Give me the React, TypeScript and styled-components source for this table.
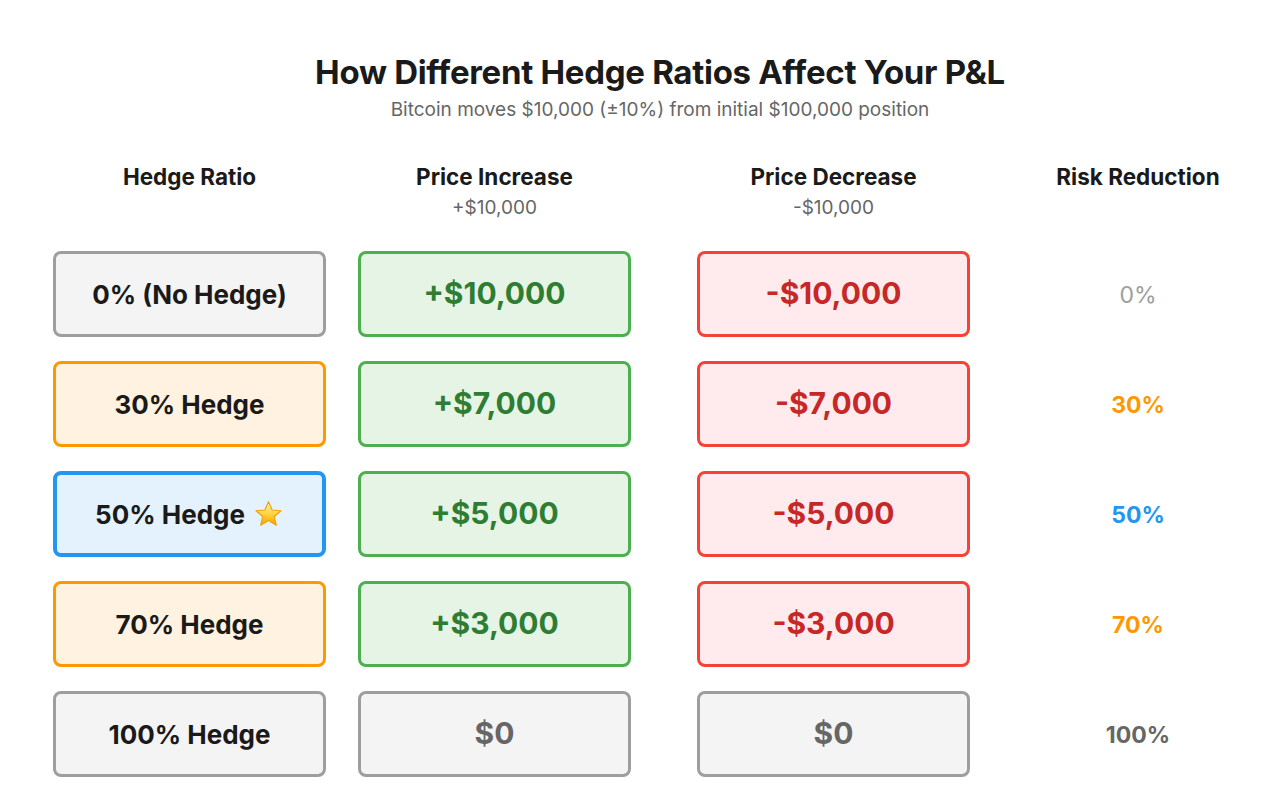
import styled, { createGlobalStyle } from "styled-components";

const GlobalStyle = createGlobalStyle`
  html, body {
    margin: 0;
    padding: 0;
    background: #ffffff;
    font-family: Inter, "Noto Sans", sans-serif;
    color: #1a1a1a;
  }
`;

type Tone = "gray" | "orange" | "blue" | "green" | "red" | "zero";

const tones: Record<Tone, { bg: string; border: string; text: string; width: number }> = {
  gray: { bg: "#f4f4f4", border: "#9e9e9e", text: "#1a1a1a", width: 3 },
  orange: { bg: "#fff2e0", border: "#ff9800", text: "#1a1a1a", width: 3 },
  blue: { bg: "#e3f2fd", border: "#2196f3", text: "#1a1a1a", width: 4 },
  green: { bg: "#e6f4e6", border: "#4caf50", text: "#2e7d32", width: 3 },
  red: { bg: "#ffebee", border: "#f44336", text: "#c62828", width: 3 },
  zero: { bg: "#f4f4f4", border: "#9e9e9e", text: "#666666", width: 3 },
};

const Page = styled.div`
  padding: 52px 5px 0 37px;
`;

const Header = styled.header`
  display: flex;
  flex-direction: column;
  align-items: center;
  padding-left: 27px;
  margin-bottom: 41px;
`;

const Title = styled.h1`
  margin: 0;
  font-size: 33px;
  font-weight: 700;
  line-height: 40px;
  letter-spacing: -0.3px;
  color: #1a1a1a;
`;

const Subtitle = styled.p`
  margin: 6px 0 0;
  font-size: 19px;
  line-height: 24px;
  color: #666666;
`;

const Grid = styled.div`
  display: grid;
  grid-template-columns: 305px 305px 373px 236px;
  row-gap: 24px;
  justify-items: center;
  align-items: center;
`;

const ColHead = styled.div`
  display: flex;
  flex-direction: column;
  align-items: center;
  align-self: start;
  height: 64px;
`;

const ColTitle = styled.div`
  font-size: 22.5px;
  font-weight: 700;
  line-height: 28px;
  color: #1a1a1a;
`;

const ColSub = styled.div`
  margin-top: 6px;
  font-size: 19px;
  line-height: 22px;
  color: #666666;
`;

const Cell = styled.div<{ $tone: Tone }>`
  box-sizing: border-box;
  width: 273px;
  height: 86px;
  display: flex;
  align-items: center;
  justify-content: center;
  gap: 8px;
  border-radius: 8px;
  background: ${(p) => tones[p.$tone].bg};
  border: ${(p) => tones[p.$tone].width}px solid ${(p) => tones[p.$tone].border};
  color: ${(p) => tones[p.$tone].text};
`;

const RatioText = styled.span`
  font-size: 26px;
  font-weight: 700;
`;

const Amount = styled.span`
  font-size: 30px;
  font-weight: 700;
  margin-top: -2px;
`;

const Risk = styled.div<{ $color: string; $bold: boolean }>`
  font-size: 23px;
  font-weight: ${(p) => (p.$bold ? 700 : 400)};
  color: ${(p) => p.$color};
  margin-top: 2px;
`;

const Star = () => (
  <svg width="31" height="31" viewBox="0 0 28 28" aria-hidden="true">
    <defs>
      <linearGradient id="starFill" x1="0" y1="0" x2="0" y2="1">
        <stop offset="0" stopColor="#fff3b0" />
        <stop offset="0.55" stopColor="#ffd23a" />
        <stop offset="1" stopColor="#f5a100" />
      </linearGradient>
    </defs>
    <path
      d="M14 2.5 L17.3 10 L25.3 10.6 L19.2 15.8 L21.1 23.7 L14 19.5 L6.9 23.7 L8.8 15.8 L2.7 10.6 L10.7 10 Z"
      fill="url(#starFill)"
      stroke="#f0a200"
      strokeWidth="1"
      strokeLinejoin="round"
    />
  </svg>
);

interface Row {
  label: string;
  tone: Tone;
  star?: boolean;
  up: string;
  down: string;
  risk: string;
  riskColor: string;
  riskBold: boolean;
}

const rows: Row[] = [
  { label: "0% (No Hedge)", tone: "gray", up: "+$10,000", down: "-$10,000", risk: "0%", riskColor: "#9e9e9e", riskBold: false },
  { label: "30% Hedge", tone: "orange", up: "+$7,000", down: "-$7,000", risk: "30%", riskColor: "#ff9800", riskBold: true },
  { label: "50% Hedge", tone: "blue", star: true, up: "+$5,000", down: "-$5,000", risk: "50%", riskColor: "#2196f3", riskBold: true },
  { label: "70% Hedge", tone: "orange", up: "+$3,000", down: "-$3,000", risk: "70%", riskColor: "#ff9800", riskBold: true },
  { label: "100% Hedge", tone: "gray", up: "$0", down: "$0", risk: "100%", riskColor: "#666666", riskBold: true },
];

export default function App() {
  return (
    <>
      <GlobalStyle />
      <Page>
        <Header>
          <Title>How Different Hedge Ratios Affect Your P&amp;L</Title>
          <Subtitle>Bitcoin moves $10,000 (±10%) from initial $100,000 position</Subtitle>
        </Header>

        <Grid>
          <ColHead>
            <ColTitle>Hedge Ratio</ColTitle>
          </ColHead>
          <ColHead>
            <ColTitle>Price Increase</ColTitle>
            <ColSub>+$10,000</ColSub>
          </ColHead>
          <ColHead>
            <ColTitle>Price Decrease</ColTitle>
            <ColSub>-$10,000</ColSub>
          </ColHead>
          <ColHead>
            <ColTitle>Risk Reduction</ColTitle>
          </ColHead>

          {rows.map((r) => {
            const zero = r.up === "$0";
            return [
              <Cell key={r.label + "l"} $tone={r.tone}>
                <RatioText>{r.label}</RatioText>
                {r.star && <Star />}
              </Cell>,
              <Cell key={r.label + "u"} $tone={zero ? "zero" : "green"}>
                <Amount>{r.up}</Amount>
              </Cell>,
              <Cell key={r.label + "d"} $tone={zero ? "zero" : "red"}>
                <Amount>{r.down}</Amount>
              </Cell>,
              <Risk key={r.label + "r"} $color={r.riskColor} $bold={r.riskBold}>
                {r.risk}
              </Risk>,
            ];
          })}
        </Grid>
      </Page>
    </>
  );
}
